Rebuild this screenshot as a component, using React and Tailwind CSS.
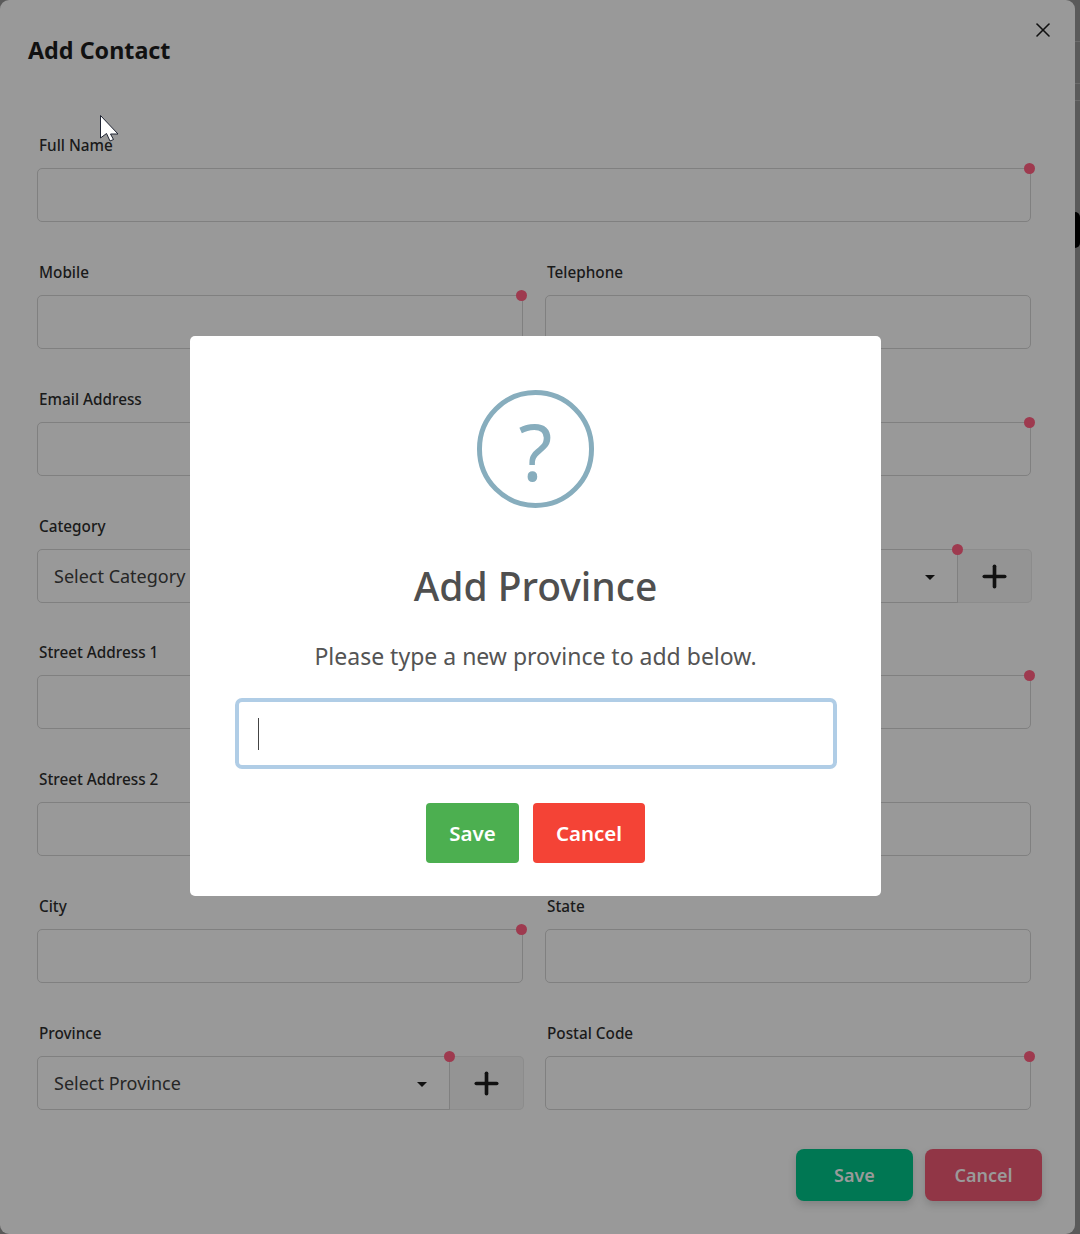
import React from "react";
import { X, Plus } from "lucide-react";

const font = "font-['Noto_Sans','Open_Sans',sans-serif]";

function Dot({ className }) {
  return <span className={`absolute w-[11px] h-[11px] rounded-full bg-[#9e3a4f] ${className}`} />;
}

function Label({ children }) {
  return <label className="h-[33px] pl-[2px] text-[15.3px] leading-[20px] font-medium text-[#1a1a1a]">{children}&nbsp;</label>;
}

function Field({ label, dot, className = "" }) {
  return (
    <div className={`flex flex-col ${className}`}>
      <Label>{label}</Label>
      <div className="relative h-[54px] rounded-[5px] border border-[#808080]">
        {dot && <Dot className="-top-[6px] -right-[5px]" />}
      </div>
    </div>
  );
}

function SelectField({ label, placeholder, className = "" }) {
  return (
    <div className={`flex flex-col ${className}`}>
      <Label>{label}</Label>
      <div className="flex h-[54px]">
        <div className="relative flex-1 flex items-center justify-between pl-[16px] pr-[22px] rounded-l-[5px] border border-[#808080]">
          <span className="text-[18px] text-[#262626]">{placeholder}</span>
          <span className="w-0 h-0 mt-[2px] border-x-[5px] border-t-[5px] border-x-transparent border-t-[#111]" />
          <Dot className="-top-[6px] -right-[6px]" />
        </div>
        <div className="w-[75px] -ml-px flex items-center justify-center rounded-r-[5px] border border-[#8c8c8c] border-l-[#808080] bg-[#949494]">
          <Plus size={35} strokeWidth={2.5} className="text-[#111]" />
        </div>
      </div>
    </div>
  );
}

export default function App() {
  return (
    <div className={`relative w-[1080px] h-[1234px] overflow-hidden bg-[#5a5a5a] ${font}`}>
      <div className="absolute right-0 top-[41px] w-[5px] h-px bg-[#6b6b6b]" />
      <div className="absolute right-0 top-[83px] w-[5px] h-px bg-[#6b6b6b]" />
      <div className="absolute right-0 top-[100px] w-[5px] h-px bg-[#6b6b6b]" />
      <div className="absolute right-0 top-[212px] w-[5px] h-[36px] rounded-r-[5px] bg-black" />

      <div className="relative w-[1075px] h-[1234px] rounded-[9px] bg-[#999999] pt-[33px] pl-[37px] pr-[44px]">
        <h2 className="-ml-[9px] h-[102px] text-[23.3px] leading-[34px] font-bold text-[#111]">Add Contact</h2>
        <X size={24} strokeWidth={1.6} className="absolute top-[18px] right-[20px] text-[#111]" />

        <div className="grid grid-cols-2 gap-x-[22px] gap-y-[40px]">
          <Field label="Full Name" dot className="col-span-2" />
          <Field label="Mobile" dot />
          <Field label="Telephone" />
          <Field label="Email Address" />
          <Field dot />
          <SelectField label="Category" placeholder="Select Category" className="-mb-px" />
          <SelectField className="-mr-px -mb-px" />
          <Field label="Street Address 1" />
          <Field dot />
          <Field label="Street Address 2" />
          <Field />
          <Field label="City" dot />
          <Field label="State" />
          <SelectField label="Province" placeholder="Select Province" className="-mr-px" />
          <Field label="Postal Code" dot />
        </div>

        <div className="mt-[39px] -mr-[11px] flex justify-end gap-[12px]">
          <button className="w-[117px] h-[52px] rounded-[8px] bg-[#007753] text-[18px] font-semibold text-[#9a9a9a] shadow-[0_4px_8px_rgba(0,0,0,0.15)]">Save</button>
          <button className="w-[117px] h-[52px] rounded-[8px] bg-[#913646] text-[18px] font-semibold text-[#9a9a9a] shadow-[0_4px_8px_rgba(0,0,0,0.15)]">Cancel</button>
        </div>
      </div>

      {/* mouse cursor */}
      <svg className="absolute left-[100px] top-[115px]" width="20" height="28" viewBox="0 0 20 28">
        <path d="M0.5 0.5 V23 L6.5 18.5 L10 26 L13.5 24.5 L10.5 19 H18 Z" fill="#fff" stroke="#1f2433" strokeWidth="1" />
      </svg>

      {/* prompt */}
      <div className="absolute inset-0 flex items-center justify-center pr-[9px] pb-[2px]">
        <div className="w-[691px] h-[560px] rounded-[5px] bg-white flex flex-col items-center pt-[54px]">
          <div className="w-[117px] h-[118px] rounded-full border-[5px] border-[#87adbd] flex items-center justify-center">
            <span className="mt-[4px] text-[78px] leading-none text-[#87adbd]">?</span>
          </div>
          <h2 className="mt-[53px] text-[39px] leading-[50px] font-medium text-[#4f4f4f]">Add Province</h2>
          <p className="mt-[29px] text-[23px] leading-[32px] text-[#545454]">Please type a new province to add below.</p>
          <div className="mt-[26px] w-[602px] h-[71px] rounded-[7px] border-[4px] border-[#b0cde6] flex items-center pl-[19px]">
            <span className="w-px h-[32px] bg-[#444]" />
          </div>
          <div className="mt-[34px] flex gap-[14px]">
            <button className="w-[93px] h-[60px] rounded-[4px] bg-[#4caf50] text-[20.5px] font-semibold text-white">Save</button>
            <button className="w-[112px] h-[60px] rounded-[4px] bg-[#f44336] text-[20.5px] font-semibold text-white">Cancel</button>
          </div>
        </div>
      </div>
    </div>
  );
}
